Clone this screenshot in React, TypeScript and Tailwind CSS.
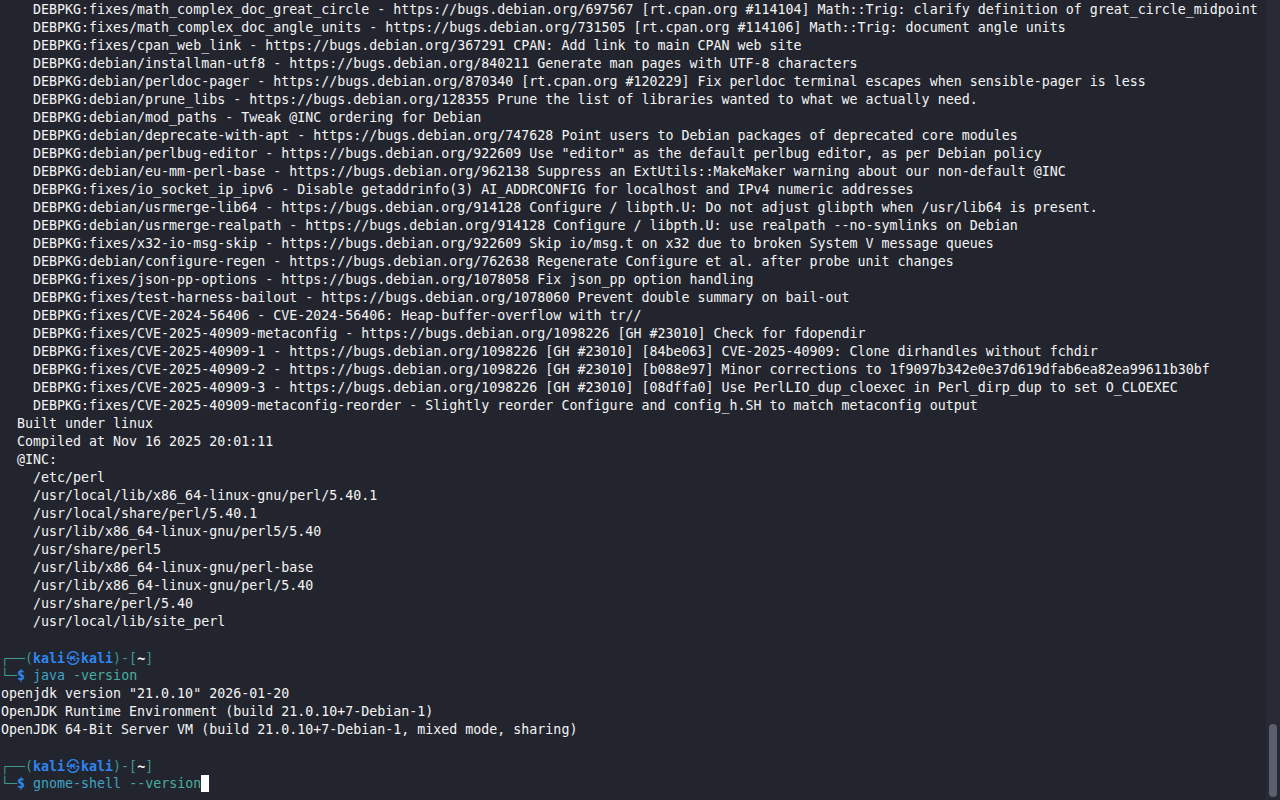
import React from "react";

const lines: string[] = [
  "    DEBPKG:fixes/math_complex_doc_great_circle - https://bugs.debian.org/697567 [rt.cpan.org #114104] Math::Trig: clarify definition of great_circle_midpoint",
  "    DEBPKG:fixes/math_complex_doc_angle_units - https://bugs.debian.org/731505 [rt.cpan.org #114106] Math::Trig: document angle units",
  "    DEBPKG:fixes/cpan_web_link - https://bugs.debian.org/367291 CPAN: Add link to main CPAN web site",
  "    DEBPKG:debian/installman-utf8 - https://bugs.debian.org/840211 Generate man pages with UTF-8 characters",
  "    DEBPKG:debian/perldoc-pager - https://bugs.debian.org/870340 [rt.cpan.org #120229] Fix perldoc terminal escapes when sensible-pager is less",
  "    DEBPKG:debian/prune_libs - https://bugs.debian.org/128355 Prune the list of libraries wanted to what we actually need.",
  "    DEBPKG:debian/mod_paths - Tweak @INC ordering for Debian",
  "    DEBPKG:debian/deprecate-with-apt - https://bugs.debian.org/747628 Point users to Debian packages of deprecated core modules",
  '    DEBPKG:debian/perlbug-editor - https://bugs.debian.org/922609 Use "editor" as the default perlbug editor, as per Debian policy',
  "    DEBPKG:debian/eu-mm-perl-base - https://bugs.debian.org/962138 Suppress an ExtUtils::MakeMaker warning about our non-default @INC",
  "    DEBPKG:fixes/io_socket_ip_ipv6 - Disable getaddrinfo(3) AI_ADDRCONFIG for localhost and IPv4 numeric addresses",
  "    DEBPKG:debian/usrmerge-lib64 - https://bugs.debian.org/914128 Configure / libpth.U: Do not adjust glibpth when /usr/lib64 is present.",
  "    DEBPKG:debian/usrmerge-realpath - https://bugs.debian.org/914128 Configure / libpth.U: use realpath --no-symlinks on Debian",
  "    DEBPKG:fixes/x32-io-msg-skip - https://bugs.debian.org/922609 Skip io/msg.t on x32 due to broken System V message queues",
  "    DEBPKG:debian/configure-regen - https://bugs.debian.org/762638 Regenerate Configure et al. after probe unit changes",
  "    DEBPKG:fixes/json-pp-options - https://bugs.debian.org/1078058 Fix json_pp option handling",
  "    DEBPKG:fixes/test-harness-bailout - https://bugs.debian.org/1078060 Prevent double summary on bail-out",
  "    DEBPKG:fixes/CVE-2024-56406 - CVE-2024-56406: Heap-buffer-overflow with tr//",
  "    DEBPKG:fixes/CVE-2025-40909-metaconfig - https://bugs.debian.org/1098226 [GH #23010] Check for fdopendir",
  "    DEBPKG:fixes/CVE-2025-40909-1 - https://bugs.debian.org/1098226 [GH #23010] [84be063] CVE-2025-40909: Clone dirhandles without fchdir",
  "    DEBPKG:fixes/CVE-2025-40909-2 - https://bugs.debian.org/1098226 [GH #23010] [b088e97] Minor corrections to 1f9097b342e0e37d619dfab6ea82ea99611b30bf",
  "    DEBPKG:fixes/CVE-2025-40909-3 - https://bugs.debian.org/1098226 [GH #23010] [08dffa0] Use PerlLIO_dup_cloexec in Perl_dirp_dup to set O_CLOEXEC",
  "    DEBPKG:fixes/CVE-2025-40909-metaconfig-reorder - Slightly reorder Configure and config_h.SH to match metaconfig output",
  "  Built under linux",
  "  Compiled at Nov 16 2025 20:01:11",
  "  @INC:",
  "    /etc/perl",
  "    /usr/local/lib/x86_64-linux-gnu/perl/5.40.1",
  "    /usr/local/share/perl/5.40.1",
  "    /usr/lib/x86_64-linux-gnu/perl5/5.40",
  "    /usr/share/perl5",
  "    /usr/lib/x86_64-linux-gnu/perl-base",
  "    /usr/lib/x86_64-linux-gnu/perl/5.40",
  "    /usr/share/perl/5.40",
  "    /usr/local/lib/site_perl",
  "",
];

const javaOut: string[] = [
  'openjdk version "21.0.10" 2026-01-20',
  "OpenJDK Runtime Environment (build 21.0.10+7-Debian-1)",
  "OpenJDK 64-Bit Server VM (build 21.0.10+7-Debian-1, mixed mode, sharing)",
  "",
];

function Line({ children }: { children?: React.ReactNode }) {
  return <div className="h-[18px] leading-[18px] whitespace-pre">{children}</div>;
}

function PromptTop() {
  return (
    <Line>
      <span className="text-[#3a9a8c]">┌──(</span>
      <span className="text-[#2f86f0] font-bold">kali</span>
      <span className="inline-block w-[16px] text-center text-[#2f86f0] font-bold" style={{ fontFamily: '"Noto Sans CJK KR", "DejaVu Sans", sans-serif' }}>
        ㉿
      </span>
      <span className="text-[#2f86f0] font-bold">kali</span>
      <span className="text-[#3a9a8c]">)-[</span>
      <span className="text-white font-bold">~</span>
      <span className="text-[#3a9a8c]">]</span>
    </Line>
  );
}

function PromptBottom({ cmd, arg, cursor }: { cmd: string; arg: string; cursor?: boolean }) {
  return (
    <Line>
      <span className="text-[#3a9a8c]">└─</span>
      <span className="text-[#2f86f0] font-bold">$</span>
      <span> </span>
      <span className="text-[#3fa3c4]">{cmd}</span>
      <span> </span>
      <span className="text-[#48ad9f]">{arg}</span>
      {cursor && <span className="inline-block w-[8px] h-[17px] align-top bg-white" />}
    </Line>
  );
}

export default function App() {
  return (
    <div
      className="w-[1280px] h-[800px] overflow-hidden bg-[#23252e] text-[#f4f4f4] flex"
      style={{ fontFamily: '"DejaVu Sans Mono", "Liberation Mono", monospace' }}
    >
      <div className="flex-1 pl-[1px] pt-[1px] text-[13.3px]">
        {lines.map((l, i) => (
          <Line key={i}>{l}</Line>
        ))}
        <PromptTop />
        <PromptBottom cmd="java" arg="-version" />
        {javaOut.map((l, i) => (
          <Line key={"j" + i}>{l}</Line>
        ))}
        <PromptTop />
        <PromptBottom cmd="gnome-shell" arg="--version" cursor />
      </div>
      <div className="w-[14px] h-full bg-[#272934] flex flex-col justify-end pb-[3px] pl-[3px] pr-[3px]">
        <div className="w-[8px] h-[73px] rounded-full bg-[#5c5f6d]" />
      </div>
    </div>
  );
}
